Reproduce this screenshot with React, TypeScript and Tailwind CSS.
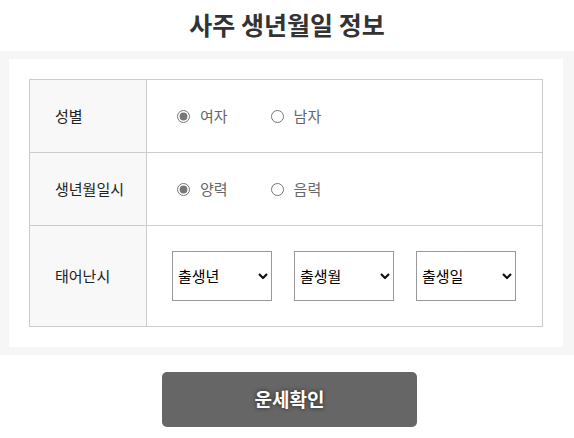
import { useState } from 'react'

const font = "font-['Malgun_Gothic','Noto_Sans_CJK_KR',sans-serif]"

function Radio({ name, label, checked, onChange }: { name: string; label: string; checked: boolean; onChange: () => void }) {
    return (
        <label className="flex items-center mr-[43px] cursor-pointer">
            <input
                type="radio"
                name={name}
                checked={checked}
                onChange={onChange}
                className="w-[13px] h-[13px] m-0 mr-[10px] accent-[#777]"
            />
            <span className="text-[15px] text-[#666]">{label}</span>
        </label>
    )
}

function DateSelect({ label }: { label: string }) {
    return (
        <div className="relative w-[100px] h-[50px]">
            <select className="appearance-none w-full h-full border border-[#999] bg-white pl-[5px] text-[15px] text-black">
                <option>{label}</option>
            </select>
            <svg className="absolute right-[4px] top-1/2 -translate-y-1/2 pointer-events-none" width="10" height="7" viewBox="0 0 10 7">
                <path d="M1 1.5 L5 5.5 L9 1.5" fill="none" stroke="#111" strokeWidth="2.2" />
            </svg>
        </div>
    )
}

export default function App() {
    const [gender, setGender] = useState('f')
    const [cal, setCal] = useState('solar')

    return (
        <div className={`${font} w-[574px] h-[438px] bg-white`}>
            {/* Title */}
            <h1 className="h-[51px] flex items-center justify-center text-[25px] font-bold text-[#333] pb-[1px]">
                사주 생년월일 정보
            </h1>

            {/* Form panel */}
            <div className="bg-[#f6f6f6] p-[8px] pl-[9px] pr-[11px]">
                <div className="bg-white px-[20px] py-[20px] h-[288px]">
                    <table className="w-[514px] border-collapse border border-[#ccc]">
                        <tbody>
                            <tr className="h-[73px]">
                                <th className="w-[117px] bg-[#f8f8f8] border border-[#ccc] text-left pl-[25px] text-[15px] font-normal text-[#222]">성별</th>
                                <td className="border border-[#ccc] pl-[30px]">
                                    <div className="flex">
                                        <Radio name="gender" label="여자" checked={gender === 'f'} onChange={() => setGender('f')} />
                                        <Radio name="gender" label="남자" checked={gender === 'm'} onChange={() => setGender('m')} />
                                    </div>
                                </td>
                            </tr>
                            <tr className="h-[73px]">
                                <th className="bg-[#f8f8f8] border border-[#ccc] text-left pl-[25px] text-[15px] font-normal text-[#222]">생년월일시</th>
                                <td className="border border-[#ccc] pl-[30px]">
                                    <div className="flex">
                                        <Radio name="cal" label="양력" checked={cal === 'solar'} onChange={() => setCal('solar')} />
                                        <Radio name="cal" label="음력" checked={cal === 'lunar'} onChange={() => setCal('lunar')} />
                                    </div>
                                </td>
                            </tr>
                            <tr className="h-[101px]">
                                <th className="bg-[#f8f8f8] border border-[#ccc] text-left pl-[25px] text-[15px] font-normal text-[#222]">태어난시</th>
                                <td className="border border-[#ccc] pl-[25px]">
                                    <div className="flex gap-[22px]">
                                        <DateSelect label="출생년" />
                                        <DateSelect label="출생월" />
                                        <DateSelect label="출생일" />
                                    </div>
                                </td>
                            </tr>
                        </tbody>
                    </table>
                </div>
            </div>

            {/* Submit */}
            <div className="flex justify-center pt-[17px] pl-[5px]">
                <button className="w-[255px] h-[55px] rounded-[5px] bg-[#666] text-white text-[19px] font-bold [text-shadow:0_0_4px_rgba(0,0,0,0.7)]">
                    운세확인
                </button>
            </div>
        </div>
    )
}
